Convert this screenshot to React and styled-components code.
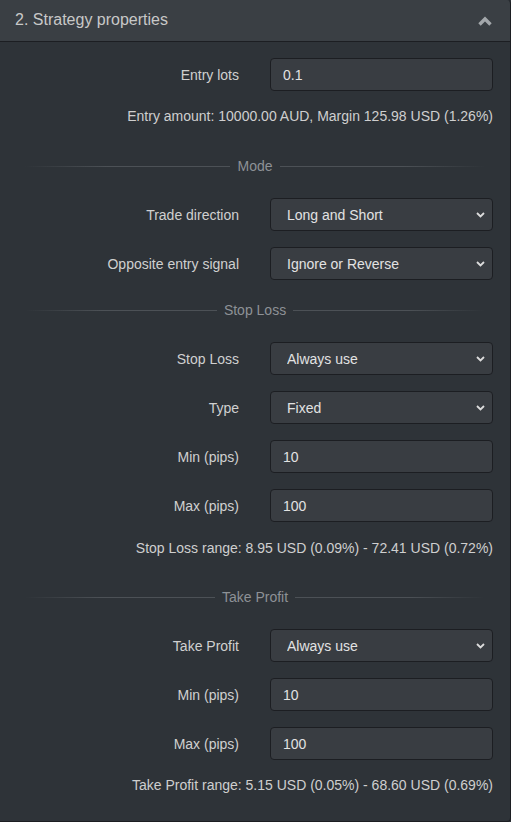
import React from "react";
import styled, { createGlobalStyle } from "styled-components";

const Global = createGlobalStyle`
  html, body { margin: 0; padding: 0; background: #2e3338; }
  body { font-family: "Liberation Sans", Arial, sans-serif; }
  * { box-sizing: border-box; }
`;

const Panel = styled.div`
  width: 511px;
  height: 822px;
  display: flex;
  flex-direction: column;
  background: #2e3338;
  border-right: 1px solid #1c1e22;
  border-bottom: 1px solid #1c1e22;
  border-top-right-radius: 4px;
  border-bottom-right-radius: 4px;
  overflow: hidden;
`;

const Header = styled.div`
  height: 42px;
  flex: none;
  display: flex;
  align-items: center;
  justify-content: space-between;
  padding: 0 18px 0 15px;
  background: #3a3f44;
  border-bottom: 1px solid #1c1e22;
`;

const Title = styled.h2`
  margin: 0 0 2px 0;
  font-size: 16px;
  font-weight: normal;
  color: #c8c8c8;
`;

const Body = styled.div`
  flex: 1;
  display: flex;
  flex-direction: column;
  padding: 16px 17px 0 15px;
`;

const Row = styled.div`
  display: grid;
  grid-template-columns: 1fr 223px;
  column-gap: 31px;
  align-items: center;
  margin-top: ${(p) => p.$mt ?? 16}px;
`;

const Label = styled.label`
  text-align: right;
  font-size: 14px;
  color: #d0d0d0;
`;

const Input = styled.input`
  height: 33px;
  width: 100%;
  padding: 0 12px;
  background: #393d42;
  border: 1px solid #1c1e22;
  border-radius: 4px;
  color: #e2e2e2;
  font-family: "Liberation Sans", Arial, sans-serif;
  font-size: 14px;
  outline: none;
`;

const SelectWrap = styled.div`
  position: relative;
  height: 33px;
`;

const Select = styled.select`
  appearance: none;
  -webkit-appearance: none;
  height: 33px;
  width: 100%;
  padding: 0 16px;
  background: #393d42;
  border: 1px solid #1c1e22;
  border-radius: 4px;
  color: #e2e2e2;
  font-family: "Liberation Sans", Arial, sans-serif;
  font-size: 14px;
  outline: none;
`;

const Arrow = styled.svg`
  position: absolute;
  right: 8px;
  top: 14px;
  pointer-events: none;
`;

const Info = styled.div`
  margin-top: ${(p) => p.$mt ?? 15}px;
  text-align: right;
  font-size: 14px;
  line-height: 20px;
  color: #cfcfcf;
`;

const Divider = styled.div`
  display: flex;
  align-items: center;
  gap: 7px;
  margin: ${(p) => p.$mt}px 8px 0 10px;
  line-height: 20px;
  font-size: 14px;
  color: #8d9196;
`;

const Line = styled.span`
  flex: 1;
  height: 1px;
  background: linear-gradient(
    ${(p) => (p.$side === "left" ? "to right" : "to left")},
    rgba(80, 86, 92, 0),
    #4c5156 40%
  );
`;

function Field({ label, value, mt }) {
  return (
    <Row $mt={mt}>
      <Label>{label}</Label>
      <Input defaultValue={value} />
    </Row>
  );
}

function Choice({ label, value, mt }) {
  return (
    <Row $mt={mt}>
      <Label>{label}</Label>
      <SelectWrap>
        <Select defaultValue={value}>
          <option>{value}</option>
        </Select>
        <Arrow width="9" height="6" viewBox="0 0 9 6">
          <polyline points="1,1 4.5,4.5 8,1" fill="none" stroke="#dcdcdc" strokeWidth="1.8" />
        </Arrow>
      </SelectWrap>
    </Row>
  );
}

function Heading({ text, mt }) {
  return (
    <Divider $mt={mt}>
      <Line $side="left" />
      <span>{text}</span>
      <Line $side="right" />
    </Divider>
  );
}

export default function App() {
  return (
    <>
      <Global />
      <Panel>
        <Header>
          <Title>2. Strategy properties</Title>
          <svg width="14" height="10" viewBox="0 0 14 10">
            <polyline points="1.5,8.5 7,3 12.5,8.5" fill="none" stroke="#a3a7ab" strokeWidth="3.4" />
          </svg>
        </Header>
        <Body>
          <Field label="Entry lots" value="0.1" mt={0} />
          <Info>Entry amount: 10000.00 AUD, Margin 125.98 USD (1.26%)</Info>

          <Heading text="Mode" mt={30} />
          <Choice label="Trade direction" value="Long and Short" mt={22} />
          <Choice label="Opposite entry signal" value="Ignore or Reverse" />

          <Heading text="Stop Loss" mt={20} />
          <Choice label="Stop Loss" value="Always use" mt={22} />
          <Choice label="Type" value="Fixed" />
          <Field label="Min (pips)" value="10" />
          <Field label="Max (pips)" value="100" />
          <Info $mt={16}>Stop Loss range: 8.95 USD (0.09%) - 72.41 USD (0.72%)</Info>

          <Heading text="Take Profit" mt={29} />
          <Choice label="Take Profit" value="Always use" mt={22} />
          <Field label="Min (pips)" value="10" />
          <Field label="Max (pips)" value="100" />
          <Info>Take Profit range: 5.15 USD (0.05%) - 68.60 USD (0.69%)</Info>
        </Body>
      </Panel>
    </>
  );
}
